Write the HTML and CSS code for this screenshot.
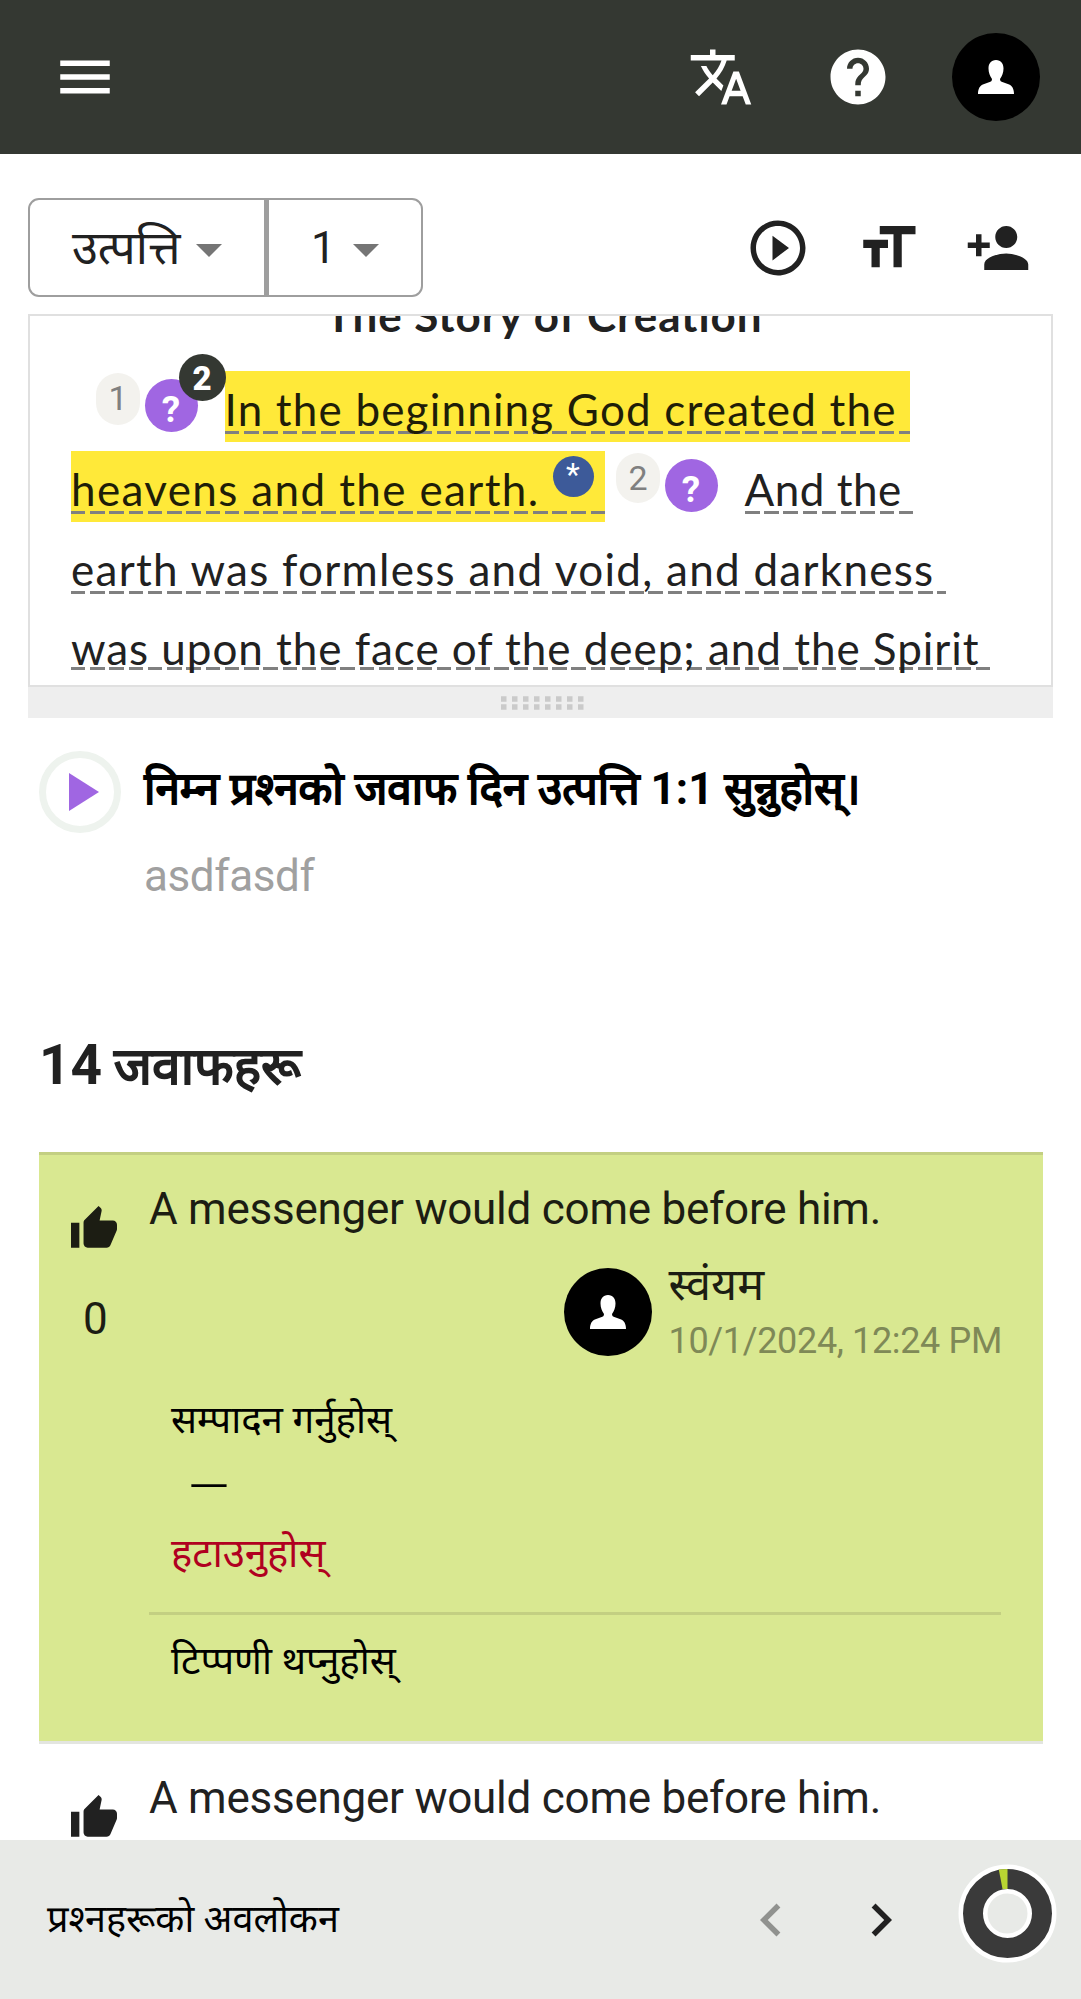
FILE: index.html
```html
<!DOCTYPE html>
<html lang="ne">
<head>
<meta charset="utf-8">
<title>उत्पत्ति 1</title>
<link rel="stylesheet" href="styles.css">
</head>
<body>
<header class="topbar">
  <svg class="icon" viewBox="0 0 24 24"><path d="M3 18h18v-2H3v2zm0-5h18v-2H3v2zm0-7v2h18V6H3z"/></svg>
  <div class="topbar-actions">
    <svg class="icon" viewBox="0 0 24 24"><path d="M12.87 15.07l-2.54-2.51.03-.03c1.74-1.94 2.98-4.17 3.71-6.53H17V4h-7V2H8v2H1v1.99h11.17C11.5 7.92 10.44 9.75 9 11.35 8.07 10.32 7.3 9.19 6.69 8h-2c.73 1.63 1.73 3.17 2.98 4.56l-5.09 5.02L4 19l5-5 3.11 3.11.76-2.04zM18.5 10h-2L12 22h2l1.12-3h4.75L21 22h2l-4.500-12zm-2.620 7l1.620-4.330L19.120 17h-3.240z"/></svg>
    <svg class="icon" viewBox="0 0 24 24"><path d="M12 2C6.480 2 2 6.480 2 12s4.480 10 10 10 10-4.480 10-10S17.520 2 12 2zm1 17h-2v-2h2v2zm2.070-7.750l-.9.920C13.450 12.900 13 13.500 13 15h-2v-.5c0-1.100.45-2.100 1.170-2.830l1.240-1.260c.37-.36.59-.86.59-1.410 0-1.100-.9-2-2-2s-2 .9-2 2H8c0-2.210 1.790-4 4-4s4 1.790 4 4c0 .88-.36 1.680-.93 2.250z"/></svg>
    <span class="avatar"><svg viewBox="0 0 36 34"><path d="M18 0c5 0 7.500 3.600 7.500 8.500 0 4-1.500 8-3.500 10.500 0 2 1 2.700 3 3.300l5.500 1.900C34 25.600 36 28.500 36 34H0c0-5.500 2-8.400 5.500-9.800l5.500-1.900c2-.6 3-1.300 3-3.300-2-2.500-3.500-6.500-3.500-10.500C10.500 3.600 13 0 18 0z"/></svg></span>
  </div>
</header>
<main>
  <div class="toolbar">
    <div class="chooser">
      <div class="select book"><span>उत्पत्ति</span><i class="caret"></i></div>
      <div class="select chapter"><span>1</span><i class="caret"></i></div>
    </div>
    <div class="tools">
      <svg class="icon" viewBox="0 0 24 24"><path d="M10 16.500l6-4.500-6-4.500v9zM12 2C6.480 2 2 6.480 2 12s4.480 10 10 10 10-4.480 10-10S17.520 2 12 2zm0 18c-4.410 0-8-3.590-8-8s3.590-8 8-8 8 3.590 8 8-3.590 8-8 8z"/></svg>
      <svg class="icon" viewBox="0 0 24 24"><path d="M9 4v3h5v12h3V7h5V4H9zm-6 8h3v7h3v-7h3V9H3v3z"/></svg>
      <svg class="icon" viewBox="0 0 24 24"><path d="M15 12c2.210 0 4-1.790 4-4s-1.790-4-4-4-4 1.790-4 4 1.790 4 4 4zm-9-2V7H4v3H1v2h3v3h2v-3h3v-2H6zm9 4c-2.670 0-8 1.340-8 4v2h16v-2c0-2.660-5.330-4-8-4z"/></svg>
    </div>
  </div>

  <section class="scripture">
    <h2 class="passage-title">The Story of Creation</h2>
    <div class="line line-1"><span class="verse v1">1</span><span class="question">?<b class="count">2</b></span><span class="seg marked s1">In the beginning God created the</span></div>
    <div class="line"><span class="seg marked s2">heavens and the earth.<sup class="note">*</sup></span><span class="verse v2">2</span><span class="question">?</span><span class="seg s3">And the</span></div>
    <div class="line"><span class="seg s4">earth was formless and void, and darkness</span></div>
    <div class="line line-last"><span class="seg s5">was upon the face of the deep; and the Spirit</span></div>
  </section>
  <div class="splitter"><svg viewBox="0 0 83 14"><path d="M0 3H83M0 11H83"/></svg></div>

  <section class="prompt">
    <span class="play"><svg viewBox="0 0 30 38"><path d="M0 0L30 19L0 38z"/></svg></span>
    <div>
      <h1 class="ask"><span>निम्न प्रश्‍नको जवाफ दिन उत्पत्ति</span> <b>1:1</b> <span>सुन्नुहोस्।</span></h1>
      <p class="detail">asdfasdf</p>
    </div>
  </section>

  <h2 class="total"><b>14</b> <span>जवाफहरू</span></h2>

  <article class="answer own">
    <div class="likes"><svg viewBox="1 3 22 20"><path d="M1 21h4V9H1v12zm22-11c0-1.100-.9-2-2-2h-6.310l.95-4.570.03-.32c0-.41-.17-.79-.44-1.060L14.170 1 7.590 7.590C7.220 7.950 7 8.450 7 9v10c0 1.100.9 2 2 2h9c.83 0 1.540-.5 1.840-1.220l3.020-7.050c.09-.23.14-.47.14-.73v-2z"/></svg><span>0</span></div>
    <div class="body">
      <p class="text">A messenger would come before him.</p>
      <div class="author">
        <span class="avatar"><svg viewBox="0 0 36 34"><path d="M18 0c5 0 7.500 3.600 7.500 8.500 0 4-1.500 8-3.500 10.500 0 2 1 2.700 3 3.300l5.500 1.900C34 25.600 36 28.500 36 34H0c0-5.500 2-8.400 5.500-9.800l5.500-1.900c2-.6 3-1.300 3-3.300-2-2.500-3.500-6.500-3.500-10.500C10.500 3.600 13 0 18 0z"/></svg></span>
        <div><p class="name">स्वंयम</p><p class="date">10/1/2024, 12:24 PM</p></div>
      </div>
      <div class="actions">
        <a class="edit">सम्पादन गर्नुहोस्</a>
        <span class="dash">—</span>
        <a class="delete">हटाउनुहोस्</a>
      </div>
      <a class="comment">टिप्‍पणी थप्‍नुहोस्</a>
    </div>
  </article>
  <article class="answer">
    <div class="likes"><svg viewBox="1 3 22 20"><path d="M1 21h4V9H1v12zm22-11c0-1.100-.9-2-2-2h-6.310l.95-4.570.03-.32c0-.41-.17-.79-.44-1.060L14.170 1 7.590 7.590C7.220 7.950 7 8.450 7 9v10c0 1.100.9 2 2 2h9c.83 0 1.540-.5 1.840-1.220l3.020-7.050c.09-.23.14-.47.14-.73v-2z"/></svg></div>
    <div class="body"><p class="text">A messenger would come before him.</p></div>
  </article>
</main>
<footer class="bottombar">
  <a class="overview">प्रश्‍नहरूको अवलोकन</a>
  <div class="pager">
    <svg class="icon off" viewBox="0 0 24 24"><path d="M15.410 7.410L14 6l-6 6 6 6 1.410-1.410L10.830 12z"/></svg>
    <svg class="icon" viewBox="0 0 24 24"><path d="M10 6L8.590 7.410 13.170 12l-4.580 4.590L10 18l6-6z"/></svg>
    <svg class="donut" viewBox="-49.500 -49.500 99 99"><circle r="34.500" class="halo"/><circle r="34.500" class="ring"/><path d="M-8.700 -44L-5 -24.600L0 -24.600V-44.500z" class="slice"/></svg>
  </div>
</footer>
</body>
</html>
```
FILE: styles.css
```css
* { box-sizing: border-box; margin: 0; padding: 0; }
body { width: 1081px; height: 1999px; overflow: hidden; display: flex; flex-direction: column; background: #fff; color: #212121; font: 44px/52px Roboto, "Noto Sans Devanagari", "Noto Sans", sans-serif; white-space: nowrap; }
.icon { width: 66px; height: 66px; fill: currentColor; flex: none; }
.topbar { height: 154px; flex: none; background: #343832; color: #fff; display: flex; align-items: center; justify-content: space-between; padding: 0 41.500px 0 52px; }
.topbar-actions { display: flex; align-items: center; }
.topbar-actions .icon { margin-right: 71px; }
.topbar-actions .icon + .icon { margin-right: 60.500px; }
.avatar { width: 88px; height: 88px; border-radius: 50%; background: #000; display: flex; align-items: center; justify-content: center; flex: none; }
.avatar svg { width: 36px; height: 34px; fill: #fff; }
main { height: 1685.500px; flex: none; overflow: hidden; }
.toolbar { height: 160px; padding: 44px 50px 0 28px; display: flex; justify-content: space-between; }
.chooser { width: 395px; height: 99px; display: flex; }
.select { border: 2px solid #9e9e9e; display: flex; align-items: center; height: 99px; }
.select.book { width: 239px; border-radius: 11px 0 0 11px; padding-left: 42px; border-right-width: 3px; font-size: 47px; }
.select.chapter { flex: 1; border-radius: 0 11px 11px 0; padding-left: 42px; }
.caret { border: 13.500px solid transparent; border-top-color: #757575; border-bottom: 0; margin-top: 6px; }
.book .caret { margin-left: 16px; }
.chapter .caret { margin-left: 17px; }
.tools { display: flex; gap: 44px; margin-top: 17px; }
.scripture { margin-left: 28px; width: 1025px; height: 373px; border: 2px solid #e0e0e0; overflow: hidden; padding: 0 41px; font-family: Lato, "Noto Sans", sans-serif; font-variant-ligatures: none; }
.passage-title { font-size: 44px; line-height: 80px; letter-spacing: .95px; margin: -41px 0 14px; padding-left: 7px; text-align: center; }
.line { display: flex; height: 79.750px; }
.line-1 { padding-left: 25px; }
.seg { height: 80px; line-height: 80px; display: flex; background: repeating-linear-gradient(90deg, #808080 0 14.500px, transparent 14.500px 19.250px) 0 62px / 100% 3px no-repeat; }
.marked { color: #1f1e08; background: repeating-linear-gradient(90deg, #808080 0 14.500px, transparent 14.500px 19.250px) 0 62px / 100% 3px no-repeat, linear-gradient(#ffe939, #ffe939) 0 2px / 100% 71px no-repeat; }
.line-last .seg { background-position: 0 59px; }
.verse, .question, .note { font-family: Roboto, sans-serif; text-align: center; flex: none; letter-spacing: 0; }
.verse { width: 44px; border-radius: 22px; background: #f3f2ee; color: #808080; font-size: 34px; }
.v1 { height: 52px; margin-top: 4px; line-height: 50px; }
.v2 { height: 50px; margin: 4px 0 0 11px; line-height: 50px; }
.question { width: 53px; height: 53px; margin: 10px 26.500px 0 5px; padding-right: 1px; border-radius: 50%; background: #a066e2; color: #fff; font-size: 37px; font-weight: 700; line-height: 61px; position: relative; }
.count { position: absolute; left: 33.500px; top: -25px; width: 47px; height: 47px; border-radius: 50%; background: #343832; font-size: 33px; line-height: 49px; }
.note { width: 41px; height: 41px; border-radius: 50%; background: #3d5a99; color: #fff; font-size: 32px; line-height: 37px; margin: 7px 0 0 13px; }
.s1 { width: 685px; letter-spacing: 1.180px; }
.s2 { width: 534px; letter-spacing: 1.370px; }
.s3 { width: 168px; letter-spacing: .5px; }
.s4 { width: 875px; letter-spacing: 1.280px; }
.s5 { width: 922px; letter-spacing: .96px; }
.splitter { margin-left: 28px; width: 1025px; height: 31px; background: #eee; display: flex; justify-content: center; align-items: center; padding-left: 3px; }
.splitter svg { width: 83px; height: 14px; }
.splitter path { stroke: #cacaca; stroke-width: 5.500; stroke-dasharray: 5.500 5.500; }
.prompt { display: flex; padding: 33px 39px 0; height: 280px; }
.play { width: 82px; height: 82px; border: 7px solid #eef3ee; border-radius: 50%; display: flex; align-items: center; padding-left: 23px; margin-right: 23px; flex: none; }
.play svg { width: 30px; height: 38px; fill: #a066e2; }
.ask { color: #000; font-size: 44px; font-weight: 400; line-height: 60px; margin-top: 8px; }
.ask span, .total span { -webkit-text-stroke: 1.800px currentColor; }
.detail { color: #a0a0a0; margin-top: 31px; letter-spacing: -.4px; }
.total { font-size: 55px; font-weight: 400; line-height: 64px; padding-left: 39px; height: 154px; padding-top: 35px; word-spacing: -2px; }
.total span { font-size: 51.500px; }
.answer { margin: 0 38px 0 39px; display: flex; border-top: 3px solid #e3e5e0; }
.own { height: 589px; background: #d9e891; color: #1c1d13; border-top-color: #c3cf82; }
.likes { width: 110px; flex: none; padding: 55px 0 0 32px; display: flex; flex-direction: column; }
.likes svg { width: 46px; height: 42px; fill: currentColor; overflow: visible; }
.likes span { padding-left: 12px; margin-top: 41px; }
.body { flex: 1; padding: 28px 42px 0 0; }
.text { letter-spacing: -.25px; }
.author { display: flex; justify-content: flex-end; gap: 17px; margin: 33px -1px 0 0; }
.name { font-size: 45px; line-height: 50px; margin-top: -8px; }
.date { font-size: 36px; line-height: 42px; margin-top: 10px; color: #7f8957; letter-spacing: -.35px; }
.actions { display: flex; flex-direction: column; padding-left: 22px; font-size: 38.500px; height: 253px; border-bottom: 3px solid #c3cf82; color: #000; }
.comment { display: block; padding: 20px 0 0 22px; font-size: 38.500px; color: #000; }
.edit { margin-top: 32px; }
.dash { padding-left: 17px; margin: 15px 0; font-size: 54px; font-weight: 300; }
.delete { color: #b00020; font-size: 40px; }
.bottombar { flex: 1; background: #e8eae7; display: flex; justify-content: space-between; color: #000; padding-left: 47px; padding-right: 24.500px; font-size: 37.800px; }
.overview { margin-top: 53px; }
.pager { display: flex; }
.pager .icon { margin: 47px 44px 0 0; color: #212121; }
.pager .off { color: #90928f; }
.donut { width: 99px; height: 99px; margin-top: 24.500px; fill: none; }
.halo { stroke: #fff; stroke-width: 29; }
.ring { stroke: #3a3a3a; stroke-width: 20; }
.slice { fill: #b9d532; }
```
